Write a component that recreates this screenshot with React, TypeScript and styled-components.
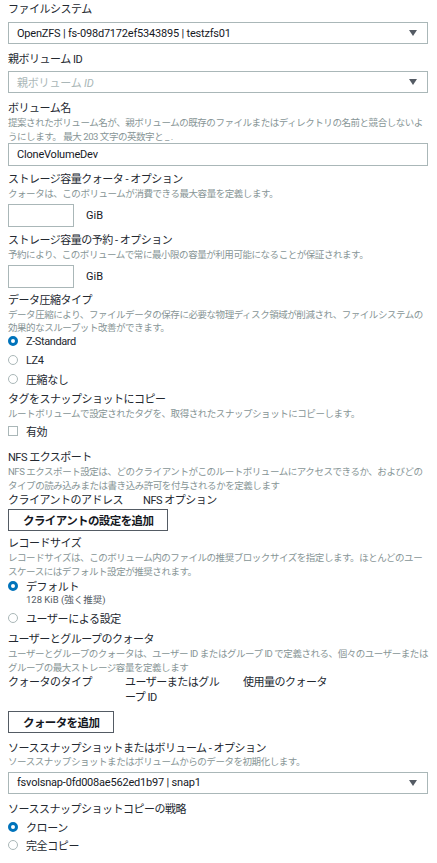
import React from 'react';
import styled, { createGlobalStyle } from 'styled-components';

const GlobalStyle = createGlobalStyle`
  html, body {
    margin: 0;
    padding: 0;
    background: #fff;
  }
  body {
    font-family: 'Roboto', 'Noto Sans CJK JP', sans-serif;
    color: #16191f;
  }
`;

const ui = `'Roboto', 'Noto Sans CJK JP', sans-serif`;

export default function App() {
  return (
    <Page>
      <GlobalStyle />

      <Field $mb={9}>
        <Label>ファイルシステム</Label>
        <Select $mt={5}>
          <SelectText>OpenZFS | fs-098d7172ef5343895 | testzfs01</SelectText>
          <Caret />
        </Select>
      </Field>

      <Field $mb={9}>
        <Label>親ボリューム ID</Label>
        <Select $mt={4}>
          <SelectText $placeholder>
            親ボリューム <em>ID</em>
          </SelectText>
          <Caret />
        </Select>
      </Field>

      <Field $mb={7}>
        <Label>ボリューム名</Label>
        <Desc>
          提案されたボリューム名が、親ボリュームの既存のファイルまたはディレクトリの名前と競合しないようにします。 最大 203 文字の英数字と _ .
        </Desc>
        <TextInput $mt={0}>CloneVolumeDev</TextInput>
      </Field>

      <Field $mb={7.5}>
        <Label>ストレージ容量クォータ - オプション</Label>
        <Desc>クォータは、このボリュームが消費できる最大容量を定義します。</Desc>
        <UnitRow $mt={3}>
          <SmallInput />
          <Unit>GiB</Unit>
        </UnitRow>
      </Field>

      <Field $mb={6}>
        <Label>ストレージ容量の予約 - オプション</Label>
        <Desc>予約により、このボリュームで常に最小限の容量が利用可能になることが保証されます。</Desc>
        <UnitRow $mt={3}>
          <SmallInput />
          <Unit>GiB</Unit>
        </UnitRow>
      </Field>

      <Field $mb={4.5}>
        <Label>データ圧縮タイプ</Label>
        <Desc>
          データ圧縮により、ファイルデータの保存に必要な物理ディスク領域が削減され、ファイルシステムの効果的なスループット改善ができます。
        </Desc>
        <Choice $h={19} $mt={-3}>
          <RadioDot $checked />
          <ChoiceText>Z-Standard</ChoiceText>
        </Choice>
        <Choice $h={19}>
          <RadioDot />
          <ChoiceText>LZ4</ChoiceText>
        </Choice>
        <Choice $h={19}>
          <RadioDot />
          <ChoiceText>圧縮なし</ChoiceText>
        </Choice>
      </Field>

      <Field $mb={10.5}>
        <Label>タグをスナップショットにコピー</Label>
        <Desc>ルートボリュームで設定されたタグを、取得されたスナップショットにコピーします。</Desc>
        <Choice $h={19} $mt={1}>
          <CheckBox />
          <ChoiceText>有効</ChoiceText>
        </Choice>
      </Field>

      <Field $mb={6}>
        <Label>NFS エクスポート</Label>
        <Desc>
          NFS エクスポート設定は、どのクライアントがこのルートボリュームにアクセスできるか、およびどのタイプの読み込みまたは書き込み許可を付与されるかを定義します
        </Desc>
        <HeaderRow $mt={2}>
          <Label>クライアントのアドレス</Label>
          <Label>NFS オプション</Label>
        </HeaderRow>
        <Button $mt={1}>クライアントの設定を追加</Button>
      </Field>

      <Field $mb={5.5}>
        <Label>レコードサイズ</Label>
        <Desc>
          レコードサイズは、このボリューム内のファイルの推奨ブロックサイズを指定します。ほとんどのユースケースにはデフォルト設定が推奨されます。
        </Desc>
        <Choice $h={16}>
          <RadioDot $checked />
          <ChoiceText>デフォルト</ChoiceText>
        </Choice>
        <SubText>128 KiB (強く推奨)</SubText>
        <Choice $h={19} $mt={2.5}>
          <RadioDot />
          <ChoiceText>ユーザーによる設定</ChoiceText>
        </Choice>
      </Field>

      <Field $mb={9}>
        <Label>ユーザーとグループのクォータ</Label>
        <Desc>
          ユーザーとグループのクォータは、ユーザー ID またはグループ ID で定義される、個々のユーザーまたはグループの最大ストレージ容量を定義します
        </Desc>
        <QuotaHead $mt={1}>
          <QuotaCol>クォータのタイプ</QuotaCol>
          <QuotaCol>ユーザーまたはグループ ID</QuotaCol>
          <QuotaCol>使用量のクォータ</QuotaCol>
        </QuotaHead>
        <Button $mt={6}>クォータを追加</Button>
      </Field>

      <Field $mb={9}>
        <Label>ソーススナップショットまたはボリューム - オプション</Label>
        <Desc $lh={12.5}>ソーススナップショットまたはボリュームからのデータを初期化します。</Desc>
        <Select $mt={3}>
          <SelectText>fsvolsnap-0fd008ae562ed1b97 | snap1</SelectText>
          <Caret />
        </Select>
      </Field>

      <Field $mb={10}>
        <Label>ソーススナップショットコピーの戦略</Label>
        <Choice $h={18} $mt={1}>
          <RadioDot $checked />
          <ChoiceText>クローン</ChoiceText>
        </Choice>
        <Choice $h={18}>
          <RadioDot />
          <ChoiceText>完全コピー</ChoiceText>
        </Choice>
      </Field>
    </Page>
  );
}

function Caret() {
  return (
    <CaretIcon width="8" height="6" viewBox="0 0 8 6">
      <path d="M0 0 H8 L4 6 Z" fill="#545b64" />
    </CaretIcon>
  );
}

const Page = styled.div`
  width: 437px;
  box-sizing: border-box;
  padding: 3px 9px 0 8px;
  display: flex;
  flex-direction: column;
`;

const Field = styled.div<{ $mb?: number }>`
  display: flex;
  flex-direction: column;
  margin-bottom: ${(p) => p.$mb ?? 8}px;
`;

const Label = styled.div`
  font-family: ${ui};
  font-size: 11px;
  line-height: 14px;
  letter-spacing: -0.5px;
  color: #232830;
`;

const Desc = styled.div<{ $lh?: number }>`
  font-family: ${ui};
  font-size: 9.5px;
  line-height: ${(p) => p.$lh ?? 13.5}px;
  letter-spacing: -0.45px;
  color: #879596;
`;

const Select = styled.div<{ $mt?: number }>`
  margin-top: ${(p) => p.$mt ?? 4}px;
  height: 22px;
  box-sizing: border-box;
  border: 1px solid #aab7b8;
  display: flex;
  align-items: center;
  justify-content: space-between;
  padding: 0 10px 0 8px;
  background: #fff;
`;

const SelectText = styled.span<{ $placeholder?: boolean }>`
  font-family: ${ui};
  font-size: 11px;
  letter-spacing: -0.2px;
  color: ${(p) => (p.$placeholder ? '#aab7b8' : '#16191f')};

  em {
    font-style: italic;
  }
`;

const CaretIcon = styled.svg`
  display: block;
  flex-shrink: 0;
`;

const TextInput = styled.div<{ $mt?: number }>`
  margin-top: ${(p) => p.$mt ?? 3}px;
  height: 23px;
  box-sizing: border-box;
  border: 1px solid #aab7b8;
  display: flex;
  align-items: center;
  padding: 0 8px;
  font-family: ${ui};
  font-size: 11px;
  letter-spacing: -0.2px;
  color: #16191f;
`;

const UnitRow = styled.div<{ $mt?: number }>`
  margin-top: ${(p) => p.$mt ?? 3}px;
  display: flex;
  align-items: center;
  gap: 12px;
`;

const SmallInput = styled.div`
  width: 66px;
  height: 23px;
  box-sizing: border-box;
  border: 1px solid #aab7b8;
`;

const Unit = styled.span`
  font-family: ${ui};
  font-size: 11px;
  color: #16191f;
`;

const Choice = styled.div<{ $h?: number; $mt?: number }>`
  height: ${(p) => p.$h ?? 19}px;
  margin-top: ${(p) => p.$mt ?? 0}px;
  display: flex;
  align-items: center;
  gap: 8px;
`;

const RadioDot = styled.span<{ $checked?: boolean }>`
  width: 10px;
  height: 10px;
  box-sizing: border-box;
  border-radius: 50%;
  flex-shrink: 0;
  background: #fff;
  border: ${(p) => (p.$checked ? '3px solid #0073bb' : '1px solid #aab7b8')};
`;

const CheckBox = styled.span`
  width: 10px;
  height: 10px;
  box-sizing: border-box;
  flex-shrink: 0;
  border: 1px solid #aab7b8;
  background: #fff;
`;

const ChoiceText = styled.span`
  font-family: ${ui};
  font-size: 11px;
  letter-spacing: -0.4px;
  color: #232830;
`;

const SubText = styled.div`
  padding-left: 18px;
  font-family: ${ui};
  font-size: 9.5px;
  line-height: 12px;
  color: #545b64;
`;

const HeaderRow = styled.div<{ $mt?: number }>`
  margin-top: ${(p) => p.$mt ?? 3}px;
  display: flex;
  gap: 20px;
`;

const Button = styled.div<{ $mt?: number }>`
  margin-top: ${(p) => p.$mt ?? 3}px;
  align-self: flex-start;
  height: 22px;
  box-sizing: border-box;
  border: 1px solid #545b64;
  padding: 0 14px;
  display: flex;
  align-items: center;
  font-family: ${ui};
  font-size: 11.5px;
  font-weight: 700;
  letter-spacing: -0.6px;
  color: #16191f;
`;

const QuotaHead = styled.div<{ $mt?: number }>`
  margin-top: ${(p) => p.$mt ?? 2}px;
  display: grid;
  grid-template-columns: 117px 118px 1fr;
`;

const QuotaCol = styled.div`
  padding-right: 18px;
  font-family: ${ui};
  font-size: 11px;
  line-height: 15px;
  letter-spacing: -0.5px;
  color: #232830;
`;
